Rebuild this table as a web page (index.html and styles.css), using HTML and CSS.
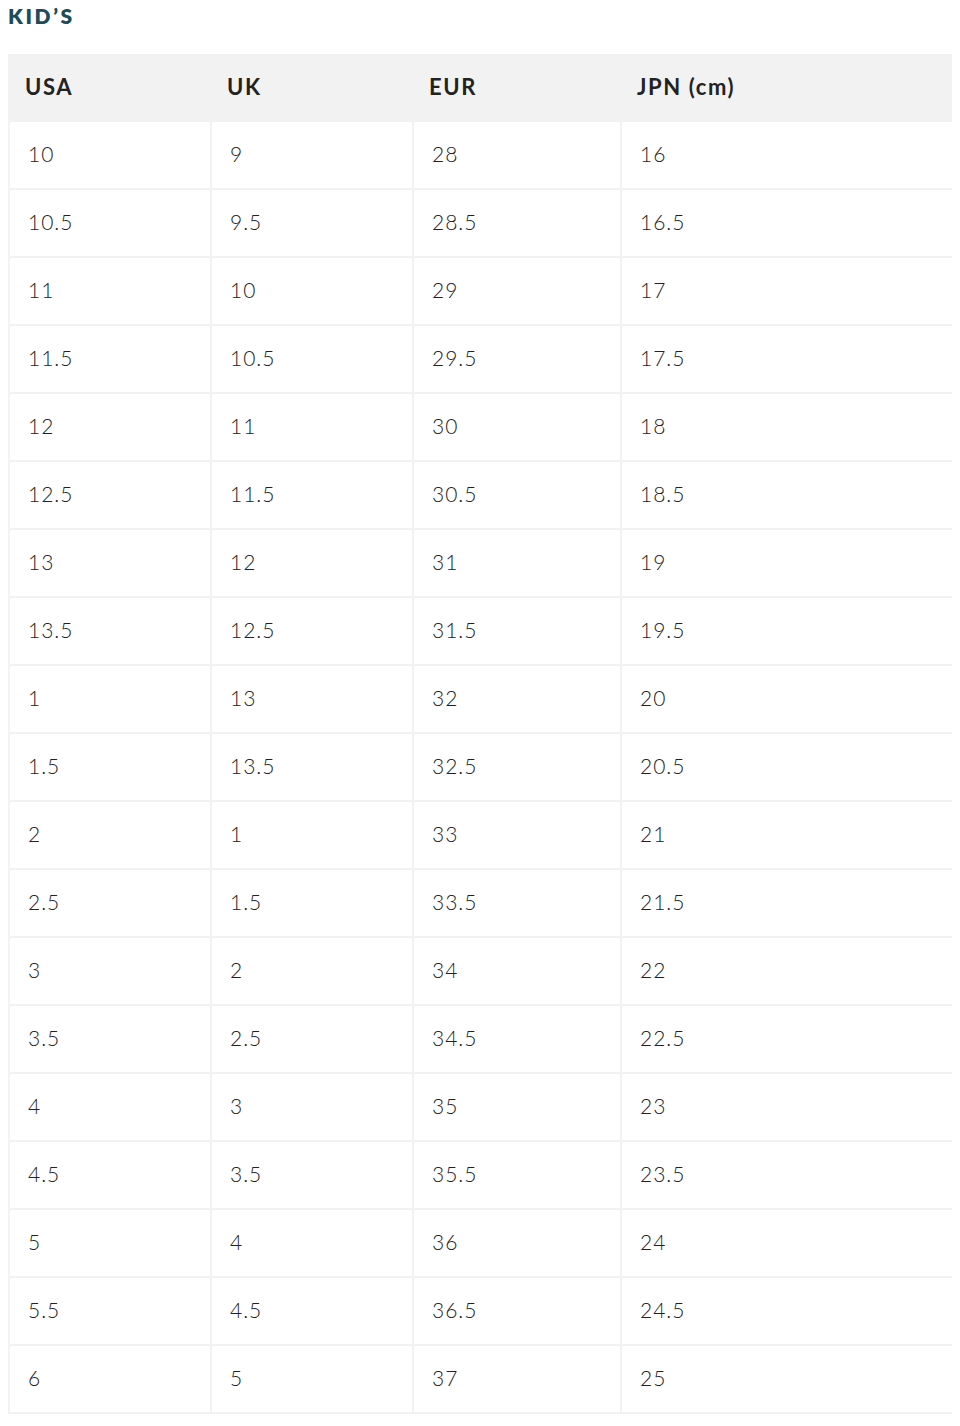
FILE: index.html
```html
<!DOCTYPE html>
<html lang="en">
<head>
<meta charset="utf-8">
<title>Kid's Size Chart</title>
<link rel="stylesheet" href="styles.css">
</head>
<body>
<div class="page">
  <h2 class="title">KID’S</h2>
  <div class="chart">
    <div class="row head">
      <div class="cell">USA</div><div class="cell">UK</div><div class="cell">EUR</div><div class="cell">JPN (cm)</div>
    </div>
    <div class="row"><div class="cell">10</div><div class="cell">9</div><div class="cell">28</div><div class="cell">16</div></div>
    <div class="row"><div class="cell">10.5</div><div class="cell">9.5</div><div class="cell">28.5</div><div class="cell">16.5</div></div>
    <div class="row"><div class="cell">11</div><div class="cell">10</div><div class="cell">29</div><div class="cell">17</div></div>
    <div class="row"><div class="cell">11.5</div><div class="cell">10.5</div><div class="cell">29.5</div><div class="cell">17.5</div></div>
    <div class="row"><div class="cell">12</div><div class="cell">11</div><div class="cell">30</div><div class="cell">18</div></div>
    <div class="row"><div class="cell">12.5</div><div class="cell">11.5</div><div class="cell">30.5</div><div class="cell">18.5</div></div>
    <div class="row"><div class="cell">13</div><div class="cell">12</div><div class="cell">31</div><div class="cell">19</div></div>
    <div class="row"><div class="cell">13.5</div><div class="cell">12.5</div><div class="cell">31.5</div><div class="cell">19.5</div></div>
    <div class="row"><div class="cell">1</div><div class="cell">13</div><div class="cell">32</div><div class="cell">20</div></div>
    <div class="row"><div class="cell">1.5</div><div class="cell">13.5</div><div class="cell">32.5</div><div class="cell">20.5</div></div>
    <div class="row"><div class="cell">2</div><div class="cell">1</div><div class="cell">33</div><div class="cell">21</div></div>
    <div class="row"><div class="cell">2.5</div><div class="cell">1.5</div><div class="cell">33.5</div><div class="cell">21.5</div></div>
    <div class="row"><div class="cell">3</div><div class="cell">2</div><div class="cell">34</div><div class="cell">22</div></div>
    <div class="row"><div class="cell">3.5</div><div class="cell">2.5</div><div class="cell">34.5</div><div class="cell">22.5</div></div>
    <div class="row"><div class="cell">4</div><div class="cell">3</div><div class="cell">35</div><div class="cell">23</div></div>
    <div class="row"><div class="cell">4.5</div><div class="cell">3.5</div><div class="cell">35.5</div><div class="cell">23.5</div></div>
    <div class="row"><div class="cell">5</div><div class="cell">4</div><div class="cell">36</div><div class="cell">24</div></div>
    <div class="row"><div class="cell">5.5</div><div class="cell">4.5</div><div class="cell">36.5</div><div class="cell">24.5</div></div>
    <div class="row"><div class="cell">6</div><div class="cell">5</div><div class="cell">37</div><div class="cell">25</div></div>
  </div>
</div>
</body>
</html>
```

FILE: styles.css
```css
html, body {
  margin: 0;
  padding: 0;
  background: #ffffff;
}

.page {
  padding: 0 8px;
  font-family: Lato, "Open Sans", "Liberation Sans", sans-serif;
}

.title {
  margin: 0 0 22px 0;
  font-size: 21px;
  line-height: 32px;
  font-weight: 800;
  letter-spacing: 2.6px;
  color: #1d4d5a;
}

.chart {
  width: 944px;
}

.row {
  display: grid;
  grid-template-columns: 202px 202px 208px 332px;
  height: 68px;
}

.row .cell {
  display: flex;
  align-items: center;
  border-left: 2px solid #f2f2f2;
  border-bottom: 2px solid #f2f2f2;
  padding-left: 18px;
  padding-bottom: 3px;
  font-size: 21px;
  font-weight: 300;
  letter-spacing: 1px;
  color: #222222;
}

.row.head {
  background: #f2f2f2;
}

.row.head .cell {
  border: none;
  padding-left: 17px;
  padding-bottom: 4px;
  font-size: 22px;
  font-weight: 700;
  letter-spacing: 1.6px;
  color: #222222;
}
```
